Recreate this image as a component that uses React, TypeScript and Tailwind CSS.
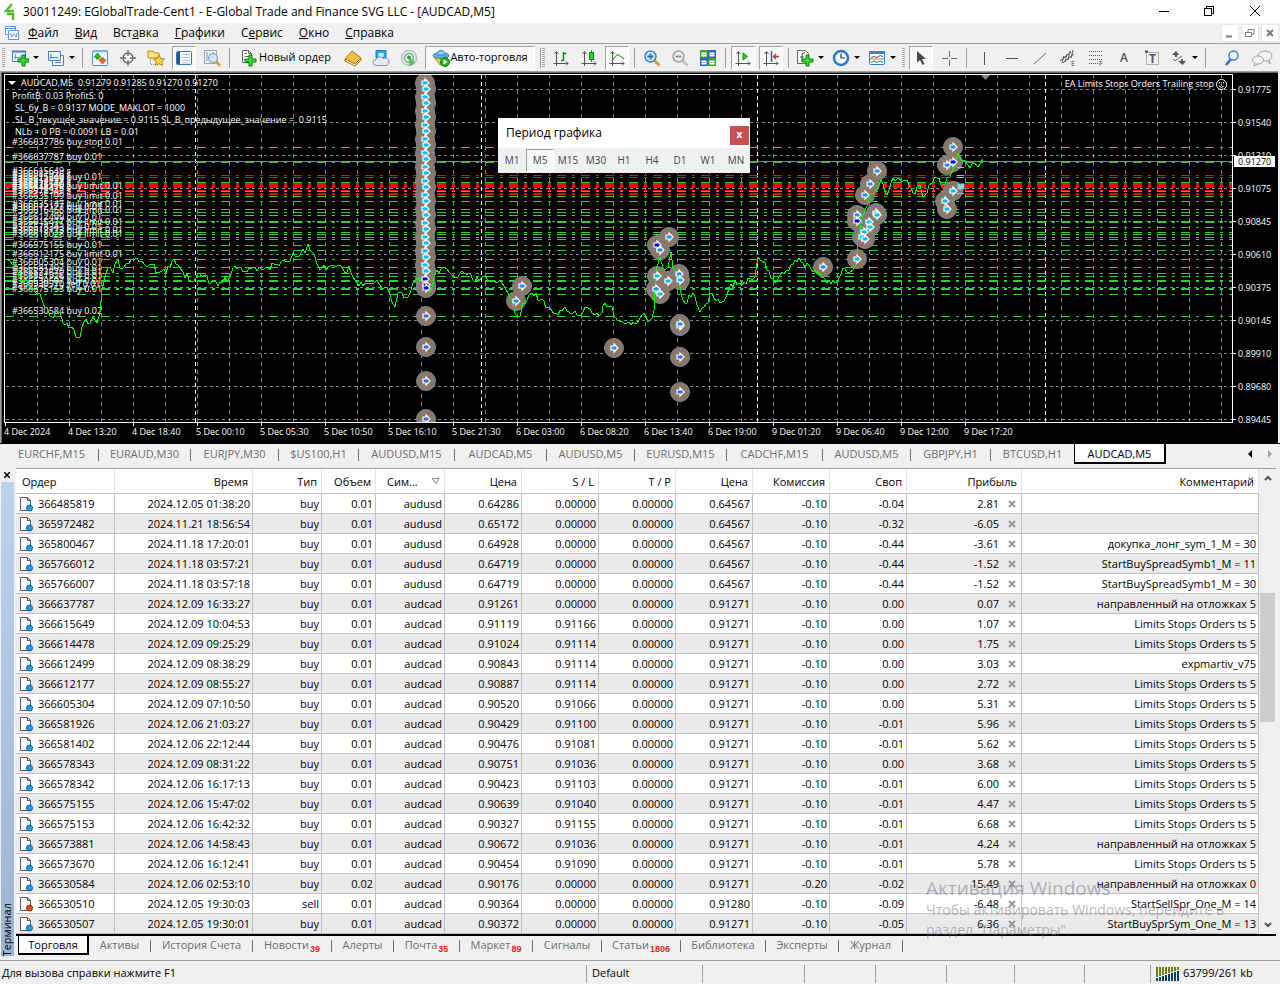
import type { ReactNode } from "react";
import clsx from "clsx";

const GRID = "#778899";
const LIME = "#32cd32";

// ---------- data ----------

const menus = [
  ["", "Ф", "айл"],
  ["", "В", "ид"],
  ["Вст", "а", "вка"],
  ["", "Г", "рафики"],
  ["С", "е", "рвис"],
  ["", "О", "кно"],
  ["", "С", "правка"],
];

const chartTabs = [
  { name: "EURCHF,M15", width: "w-[94px]" },
  { name: "EURAUD,M30", width: "w-[92px]" },
  { name: "EURJPY,M30", width: "w-[88px]" },
  { name: "$US100,H1", width: "w-[80px]" },
  { name: "AUDUSD,M15", width: "w-[96px]" },
  { name: "AUDCAD,M5", width: "w-[92px]" },
  { name: "AUDUSD,M5", width: "w-[88px]" },
  { name: "EURUSD,M15", width: "w-[92px]" },
  { name: "CADCHF,M15", width: "w-[96px]" },
  { name: "AUDUSD,M5", width: "w-[88px]" },
  { name: "GBPJPY,H1", width: "w-[80px]" },
  { name: "BTCUSD,H1", width: "w-[83px]" },
];

const terminalTabs = [
  { name: "Активы", width: "w-[62px]" },
  { name: "История Счета", width: "w-[102px]" },
  { name: "Новости", width: "w-[79px]", count: 39 },
  { name: "Алерты", width: "w-[62px]" },
  { name: "Почта", width: "w-[66px]", count: 35 },
  { name: "Маркет", width: "w-[73px]", count: 89 },
  { name: "Сигналы", width: "w-[69px]" },
  { name: "Статьи", width: "w-[79px]", count: 1806 },
  { name: "Библиотека", width: "w-[85px]" },
  { name: "Эксперты", width: "w-[73px]" },
  { name: "Журнал", width: "w-[64px]" },
];

const periods = ["M1", "M5", "M15", "M30", "H1", "H4", "D1", "W1", "MN"];

const columns = [
  { name: "Ордер", width: "w-[99px]" },
  { name: "Время", width: "w-[138px]" },
  { name: "Тип", width: "w-[69px]" },
  { name: "Объем", width: "w-[54px]" },
  { name: "Сим...", width: "w-[69px]" },
  { name: "Цена", width: "w-[77px]" },
  { name: "S / L", width: "w-[77px]" },
  { name: "T / P", width: "w-[77px]" },
  { name: "Цена", width: "w-[77px]" },
  { name: "Комиссия", width: "w-[77px]" },
  { name: "Своп", width: "w-[77px]" },
  { name: "Прибыль", width: "w-[115px]" },
  { name: "Комментарий", width: "" },
];

// order, time, type, volume, symbol, open, S/L, T/P, price, commission, swap, profit, comment
const orders = [
  ["366485819", "2024.12.05 01:38:20", "buy", "0.01", "audusd", "0.64286", "0.00000", "0.00000", "0.64567", "-0.10", "-0.04", "2.81", ""],
  ["365972482", "2024.11.21 18:56:54", "buy", "0.01", "audusd", "0.65172", "0.00000", "0.00000", "0.64567", "-0.10", "-0.32", "-6.05", ""],
  ["365800467", "2024.11.18 17:20:01", "buy", "0.01", "audusd", "0.64928", "0.00000", "0.00000", "0.64567", "-0.10", "-0.44", "-3.61", "докупка_лонг_sym_1_M = 30"],
  ["365766012", "2024.11.18 03:57:21", "buy", "0.01", "audusd", "0.64719", "0.00000", "0.00000", "0.64567", "-0.10", "-0.44", "-1.52", "StartBuySpreadSymb1_M = 11"],
  ["365766007", "2024.11.18 03:57:18", "buy", "0.01", "audusd", "0.64719", "0.00000", "0.00000", "0.64567", "-0.10", "-0.44", "-1.52", "StartBuySpreadSymb1_M = 30"],
  ["366637787", "2024.12.09 16:33:27", "buy", "0.01", "audcad", "0.91261", "0.00000", "0.00000", "0.91271", "-0.10", "0.00", "0.07", "направленный на отложках 5"],
  ["366615649", "2024.12.09 10:04:53", "buy", "0.01", "audcad", "0.91119", "0.91166", "0.00000", "0.91271", "-0.10", "0.00", "1.07", "Limits Stops Orders ts 5"],
  ["366614478", "2024.12.09 09:25:29", "buy", "0.01", "audcad", "0.91024", "0.91114", "0.00000", "0.91271", "-0.10", "0.00", "1.75", "Limits Stops Orders ts 5"],
  ["366612499", "2024.12.09 08:38:29", "buy", "0.01", "audcad", "0.90843", "0.91114", "0.00000", "0.91271", "-0.10", "0.00", "3.03", "expmartiv_v75"],
  ["366612177", "2024.12.09 08:55:27", "buy", "0.01", "audcad", "0.90887", "0.91114", "0.00000", "0.91271", "-0.10", "0.00", "2.72", "Limits Stops Orders ts 5"],
  ["366605304", "2024.12.09 07:10:50", "buy", "0.01", "audcad", "0.90520", "0.91066", "0.00000", "0.91271", "-0.10", "0.00", "5.31", "Limits Stops Orders ts 5"],
  ["366581926", "2024.12.06 21:03:27", "buy", "0.01", "audcad", "0.90429", "0.91100", "0.00000", "0.91271", "-0.10", "-0.01", "5.96", "Limits Stops Orders ts 5"],
  ["366581402", "2024.12.06 22:12:44", "buy", "0.01", "audcad", "0.90476", "0.91081", "0.00000", "0.91271", "-0.10", "-0.01", "5.62", "Limits Stops Orders ts 5"],
  ["366578343", "2024.12.09 08:31:22", "buy", "0.01", "audcad", "0.90751", "0.91036", "0.00000", "0.91271", "-0.10", "0.00", "3.68", "Limits Stops Orders ts 5"],
  ["366578342", "2024.12.06 16:17:13", "buy", "0.01", "audcad", "0.90423", "0.91103", "0.00000", "0.91271", "-0.10", "-0.01", "6.00", "Limits Stops Orders ts 5"],
  ["366575155", "2024.12.06 15:47:02", "buy", "0.01", "audcad", "0.90639", "0.91040", "0.00000", "0.91271", "-0.10", "-0.01", "4.47", "Limits Stops Orders ts 5"],
  ["366575153", "2024.12.06 16:42:32", "buy", "0.01", "audcad", "0.90327", "0.91155", "0.00000", "0.91271", "-0.10", "-0.01", "6.68", "Limits Stops Orders ts 5"],
  ["366573881", "2024.12.06 14:58:43", "buy", "0.01", "audcad", "0.90672", "0.91036", "0.00000", "0.91271", "-0.10", "-0.01", "4.24", "направленный на отложках 5"],
  ["366573670", "2024.12.06 16:12:41", "buy", "0.01", "audcad", "0.90454", "0.91090", "0.00000", "0.91271", "-0.10", "-0.01", "5.78", "Limits Stops Orders ts 5"],
  ["366530584", "2024.12.06 02:53:10", "buy", "0.02", "audcad", "0.90176", "0.00000", "0.00000", "0.91271", "-0.20", "-0.02", "15.49", "направленный на отложках 0"],
  ["366530510", "2024.12.05 19:30:03", "sell", "0.01", "audcad", "0.90364", "0.00000", "0.00000", "0.91280", "-0.10", "-0.09", "-6.48", "StartSellSpr_One_M = 14"],
  ["366530507", "2024.12.05 19:30:01", "buy", "0.01", "audcad", "0.90372", "0.00000", "0.00000", "0.91271", "-0.10", "-0.05", "6.36", "StartBuySprSym_One_M = 13"],
];

// ---------- chart data ----------

const timeLabels = [
  "4 Dec 2024", "4 Dec 13:20", "4 Dec 18:40", "5 Dec 00:10", "5 Dec 05:30", "5 Dec 10:50", "5 Dec 16:10", "5 Dec 21:30",
  "6 Dec 03:00", "6 Dec 08:20", "6 Dec 13:40", "6 Dec 19:00", "9 Dec 01:20", "9 Dec 06:40", "9 Dec 12:00", "9 Dec 17:20",
];

const priceLabels = [
  "0.91775", "0.91540", "0.91310", "0.91075", "0.90845", "0.90610", "0.90375", "0.90145", "0.89910", "0.89680", "0.89445",
];

const greenLines = [
  147, 162, 182, 191, 196, 201, 209, 212, 215, 221, 222, 227, 232, 234, 237, 239, 245, 250, 259, 267, 273, 276, 280, 281,
  288, 289, 294, 316,
];
const redLines = [175, 177, 183, 184, 185, 186, 187, 190, 193, 194];

const orderLabels: [number, string][] = [
  [145, "#366637786 buy stop 0.01"],
  [160, "#366637787 buy 0.01"],
  [174, "#366615649 s"],
  [177, "#366581926 s"],
  [180, "#366615649 buy 0.01"],
  [182, "#366612499 s"],
  [185, "#366612177 s"],
  [187, "#366573670 s"],
  [189, "#366635199 buy limit 0.01"],
  [191, "#366614478 s"],
  [194, "#366578343 s"],
  [199, "#366635199 buy limit 0.01"],
  [207, "#366635147 buy limit 0.01"],
  [210, "#366612177 buy 0.01"],
  [213, "#366616468 buy limit 0.01"],
  [220, "#366612499 buy 0.01"],
  [225, "#366615477 buy limit 0.01"],
  [230, "#366578343 buy 0.01"],
  [233, "#366612173 buy limit 0.01"],
  [237, "#366618028 buy limit 0.01"],
  [248, "#366575155 buy 0.01"],
  [257, "#366612175 buy limit 0.01"],
  [265, "#366605304 buy 0.01"],
  [271, "#366581402 buy 0.01"],
  [275, "#366573670 buy 0.01"],
  [279, "#366581926 buy 0.01"],
  [284, "#366530507 buy 0.01"],
  [287, "#366530510 sell 0.01"],
  [292, "#366575153 buy 0.01"],
  [314, "#366530584 buy 0.02"],
];

const anchors = [
  [6, 259], [15, 265], [22, 282], [28, 283], [38, 293], [43, 303], [50, 316], [60, 312], [63, 323], [72, 327], [76, 337],
  [80, 337], [84, 322], [90, 323], [93, 317], [97, 323], [100, 312], [102, 290], [106, 273], [110, 267], [113, 273],
  [118, 260], [122, 269], [127, 263], [133, 259], [142, 261], [147, 267], [152, 264], [158, 272], [166, 273], [172, 261],
  [178, 265], [183, 272], [192, 282], [198, 273], [205, 275], [209, 283], [215, 280], [218, 286], [223, 282], [230, 277],
  [233, 268], [247, 272], [253, 267], [262, 270], [277, 264], [288, 262], [293, 253], [298, 257], [303, 249], [305, 253],
  [308, 244], [313, 253], [320, 270], [328, 267], [338, 265], [345, 273], [349, 266], [357, 283], [370, 283], [377, 280],
  [382, 288], [387, 287], [392, 302], [395, 307], [398, 293], [408, 297], [413, 283], [418, 277], [430, 292], [437, 270],
  [445, 268], [452, 275], [470, 273], [473, 280], [482, 277], [492, 280], [502, 283], [508, 293], [513, 303], [517, 317],
  [520, 316], [523, 303], [532, 293], [540, 300], [548, 307], [554, 314], [565, 307], [577, 315], [588, 308], [595, 315],
  [602, 313], [603, 306], [612, 307], [617, 320], [623, 322], [637, 323], [642, 315], [650, 320], [654, 310], [655, 290],
  [657, 267], [660, 257], [663, 268], [668, 267], [671, 252], [673, 267], [678, 272], [681, 293], [685, 303], [693, 293],
  [700, 312], [708, 303], [710, 293], [722, 302], [727, 295], [735, 280], [742, 285], [748, 278], [755, 277], [758, 257],
  [765, 263], [775, 283], [782, 272], [787, 270], [795, 260], [803, 263], [813, 272], [823, 277], [827, 283], [837, 282],
  [843, 268], [850, 272], [853, 270], [857, 257], [858, 237], [865, 210], [870, 195], [875, 193], [881, 180], [887, 195],
  [893, 178], [905, 180], [913, 193], [920, 185], [923, 197], [932, 183], [935, 177], [943, 185], [950, 177], [955, 167],
  [958, 153], [961, 160], [965, 160], [970, 168], [975, 163], [978, 167], [983, 159],
];

// fills the gaps between anchors with small ticks every two pixels
function pricePath() {
  const pts: string[] = [];
  anchors.forEach(([x, y], i) => {
    pts.push(`${x},${y}`);
    const next = anchors[i + 1];
    if (!next) return;
    for (let px = x + 2; px < next[0] - 1; px += 2) {
      const t = (px - x) / (next[0] - x);
      const hash = Math.sin(px * 12.9898) * 43758;
      const noise = (hash - Math.floor(hash)) * 7 - 3.5;
      pts.push(`${px},${Math.round(y + (next[1] - y) * t + noise)}`);
    }
  });
  return pts.join(" ");
}

const SKY = "#00bfff";
const DODGER = "#1e90ff";
const ROYAL = "#4169e1";
const BLUE = "#0000ff";

const columnMarkers: [number, number, string][] = Array.from({ length: 30 }, (_, i) => [
  i % 2 ? 426 : 425,
  83 + i * 7 - (i % 2),
  i > 27 ? BLUE : SKY,
]);

const markers: [number, number, string][] = [
  ...columnMarkers,
  [426, 288, BLUE],
  [426, 316, ROYAL], [426, 347, ROYAL], [426, 381, ROYAL], [426, 419, ROYAL],
  [522, 286, DODGER], [516, 301, DODGER], [614, 348, DODGER],
  [657, 245, BLUE], [660, 250, DODGER], [669, 237, DODGER], [657, 276, SKY], [668, 281, SKY],
  [679, 274, DODGER], [680, 280, SKY], [656, 289, DODGER], [660, 294, SKY],
  [680, 326, ROYAL], [680, 324, DODGER], [680, 357, ROYAL], [680, 392, ROYAL],
  [823, 267, DODGER], [857, 259, SKY],
  [953, 147, DODGER], [947, 165, DODGER], [953, 162, BLUE], [953, 191, SKY], [945, 201, SKY], [947, 209, SKY],
  [877, 171, DODGER], [870, 184, DODGER], [865, 195, DODGER], [857, 215, DODGER], [857, 221, BLUE],
  [876, 213, SKY], [877, 215, SKY], [869, 222, SKY], [870, 227, SKY], [864, 232, SKY], [862, 237, SKY], [865, 239, SKY],
];

// ---------- chart ----------

function Chart() {
  const vertical = Array.from({ length: 38 }, (_, i) => 37 + i * 32);
  return (
    <svg
      viewBox="0 71 1280 372"
      className="block h-auto w-full bg-black font-['Open_Sans','Noto_Sans',sans-serif] text-[9px]"
      role="img"
      aria-label="AUDCAD,M5"
    >
      <defs>
        <clipPath id="plot">
          <rect x="5" y="75" width="1227" height="347" />
        </clipPath>
      </defs>
      <g shapeRendering="crispEdges" fill="none">
        <path d="M0 71.5H1280" stroke="#a0a0a0" />
        <path d="M0 72.5H1280" stroke="#696969" />
        <path d="M0.5 71V444" stroke="#a0a0a0" />
        <path d="M1.5 72V444" stroke="#696969" />
        <path d="M1279 71V444" stroke="#f0f0f0" strokeWidth="2" />
        {vertical.map((x) => (
          <path key={x} d={`M${x + 0.5} 422V75`} stroke={GRID} strokeDasharray="4 4" />
        ))}
        {priceLabels.map((p, i) => (
          <path key={p} d={`M6 ${89.5 + i * 33}H1232`} stroke={GRID} strokeDasharray="3 3" />
        ))}
        {[195, 481, 757, 1045].map((x) => (
          <path key={x} d={`M${x + 0.5} 75V422`} stroke="#fff" strokeDasharray="4 3" />
        ))}
        {greenLines.map((y) => (
          <path key={y} d={`M5 ${y + 0.5}H1232`} stroke={LIME} strokeDasharray="9 6 3 6" />
        ))}
        {redLines.map((y) => (
          <path key={y} d={`M5 ${y + 0.5}H1232`} stroke="#ff0000" strokeDasharray="9 6 3 6" />
        ))}
        <path d="M5 161.5H1232" stroke={GRID} />
      </g>

      <g fill="#fff">
        {orderLabels.map(([y, label]) => (
          <text key={y} x="12" y={y}>
            {label}
          </text>
        ))}
        <path d="M8 81H16L12 85Z" />
        <text x="21" y="86">AUDCAD,M5&nbsp; 0.91279 0.91285 0.91270 0.91270</text>
        <text x="12" y="99">ProfitB: 0.03 ProfitS: 0</text>
        <text x="15" y="111">SL_бу_B = 0.9137 MODE_MAXLOT = 1000</text>
        <text x="15" y="123">SL_B_текущее_значение = 0.9115 SL_B_предыдущее_значение =&nbsp; 0.9115</text>
        <text x="15" y="135">NLb = 0 PB = 0.0091 LB = 0.01</text>
        <text x="1214" y="87" textAnchor="end">EA Limits Stops Orders Trailing stop</text>
      </g>
      <g stroke="#fff" fill="none">
        <circle cx="1221.5" cy="84.5" r="5" />
        <path d="M1219 86Q1221.500 89 1224 86M1219.500 82V83.500M1223.500 82V83.500" />
      </g>

      <g clipPath="url(#plot)">
        {markers.map(([x, y], i) => (
          <circle key={i} cx={x} cy={y} r="9.500" fill="#8b7765" stroke={GRID} />
        ))}
        <path
          d="M957 175.500H964M957 177.500H964M958 184V189H964V184ZM957 193.500H964M957 167.500H964"
          stroke="#87ceeb"
          fill="#87ceeb"
        />
        <polyline points={pricePath()} fill="none" stroke="#00ff00" shapeRendering="crispEdges" />
        {markers.map(([x, y, color], i) => (
          <path
            key={i}
            d={`M${x - 3} ${y - 2}H${x}V${y - 4}L${x + 4} ${y}L${x} ${y + 4}V${y + 2}H${x - 3}Z`}
            fill={color}
            stroke="#fff"
            strokeWidth="1.200"
          />
        ))}
        <path d="M981 75H990L985.500 80Z" fill={GRID} />
      </g>

      <g shapeRendering="crispEdges">
        <path d="M4.500 74.500H1232.500V422.500H4.500Z" fill="none" stroke="#fff" />
        {priceLabels.map((p, i) => (
          <path key={p} d={`M1233 ${89.5 + i * 33}H1236`} stroke="#fff" />
        ))}
        {timeLabels.map((t, i) => (
          <path key={t} d={`M${5.5 + i * 64} 423V426`} stroke="#fff" />
        ))}
      </g>
      <g fill="#fff">
        {priceLabels.map((p, i) => (
          <text key={p} x="1238" y={93 + i * 33}>
            {p}
          </text>
        ))}
        {timeLabels.map((t, i) => (
          <text key={t} x={4 + i * 64} y="435">
            {t}
          </text>
        ))}
      </g>
      <rect x="1234" y="156" width="41" height="11" fill="#fff" />
      <text x="1238" y="165" fill="#000">0.91270</text>
    </svg>
  );
}

// ---------- icons ----------

function Svg({ children, size = 18 }: { children: ReactNode; size?: number }) {
  return (
    <svg width={size} height={size} viewBox="0 0 18 18" fill="none" className="shrink-0" aria-hidden="true">
      {children}
    </svg>
  );
}

const Plus = ({ x = 7, y = 6 }) => (
  <path
    d={`M${x + 4} ${y}h3v4h4v3h-4v4h-3v-4h-4v-3h4z`}
    fill="#2fe02f"
    stroke="#0b7d0b"
  />
);

const Axes = () => (
  <path d="M4.500 3V17M1.500 14.500H16M2.500 5L4.500 2.500L6.500 5M14 12.500L16 14.500L14 16.500" stroke="#555" />
);

const icons = {
  newChart: (
    <Svg>
      <path d="M1.500 2.500H14.500V12.500H1.500Z" fill="#eaf3fc" stroke="#3f7fbf" />
      <path d="M1 2.500H15" stroke="#3f7fbf" strokeWidth="2" />
      <path d="M4.500 5V10M3 8.500H11M9 6.500L11 8.500" stroke="#6ba0d0" />
      <Plus />
    </Svg>
  ),
  cascade: (
    <Svg>
      <path d="M5.500 6.500H16.500V16.500H5.500Z" fill="#fff" stroke="#3f7fbf" />
      <path d="M1.500 2.500H13.500V11.500H1.500Z" fill="#eaf3fc" stroke="#3f7fbf" />
      <path d="M1 2.500H14M4 5V10M3 8.500H11M8 13.500H14" stroke="#3f7fbf" />
    </Svg>
  ),
  marketWatch: (
    <Svg>
      <rect x="1.500" y="1.500" width="15" height="15" rx="1" fill="#f6faff" stroke="#4a90d0" />
      <path d="M2 2.500H16" stroke="#8fc0ea" strokeWidth="2" />
      <path d="M6.500 4L10 8H8V10H5V8H3Z" fill="#2fbf2f" stroke="#0b7d0b" strokeWidth=".7" />
      <path d="M11.500 15L15 11H13V9H10V11H8Z" fill="#ff6a2a" stroke="#b83208" strokeWidth=".7" />
    </Svg>
  ),
  crosshair: (
    <Svg>
      <circle cx="9" cy="9" r="5" stroke="#666" strokeWidth="1.300" />
      <path d="M9 1V7M9 11V17M1 9H7M11 9H17" stroke="#666" strokeWidth="1.300" />
    </Svg>
  ),
  folderStar: (
    <Svg>
      <path d="M1 2H6L7 4H12V9H1Z" fill="#ffe27a" stroke="#b98d1c" />
      <path d="M3.500 10V15.500H7" stroke="#888" strokeDasharray="1 1" />
      <path d="M12 6L13.700 9.500L17.500 10L14.800 12.700L15.500 16.500L12 14.700L8.500 16.500L9.200 12.700L6.500 10L10.300 9.500Z" fill="#ffd23c" stroke="#b07c10" />
    </Svg>
  ),
  navigator: (
    <Svg>
      <rect x="1.500" y="2.500" width="15" height="13" rx="1" fill="#fff" stroke="#2f78b8" />
      <rect x="2" y="3" width="3" height="12" fill="#23588c" />
      <path d="M7 5.500H15M7 8.500H15M7 11.500H15M7 14H15" stroke="#a9cbe8" />
    </Svg>
  ),
  tester: (
    <Svg>
      <rect x="1.500" y="1.500" width="12" height="13" fill="#eef1f4" stroke="#9aa7b4" />
      <path d="M4 3V12M7 5V13M10 3V9" stroke="#8794a2" />
      <circle cx="10" cy="9" r="4.500" fill="#cfe6f8" fillOpacity=".8" stroke="#6d95b8" />
      <path d="M13 12L17 17" stroke="#d9a520" strokeWidth="2.500" />
    </Svg>
  ),
  newOrder: (
    <Svg>
      <path d="M1.500 1.500H7.500L10.500 4.500V13.500H1.500Z" fill="#fff" stroke="#666" />
      <path d="M7.500 1.500V4.500H10.500M3.500 4.500H6M3.500 7.500H8M3.500 10.500H6" stroke="#666" />
      <Plus x={4} y={6} />
    </Svg>
  ),
  book: (
    <Svg>
      <path d="M8 2L17 9L11 15L1 10Z" fill="#f0bf4c" stroke="#a8741a" />
      <path d="M1 10V12L11 17L17 11V9L11 15Z" fill="#e0a838" stroke="#a8741a" />
      <path d="M2 11.500L11 16L16 11" stroke="#fff2cf" />
    </Svg>
  ),
  cloud: (
    <Svg>
      <path d="M4 1.500H14V9H4Z" fill="#29a9f0" stroke="#1479c0" />
      <rect x="6.500" y="4" width="5" height="4" fill="#d6f0ff" />
      <path d="M4 16.500a3 3 0 0 1 0-6a4 4 0 0 1 7-1a3.500 3.500 0 0 1 4 7z" fill="#e6ecf5" stroke="#7f93b8" />
    </Svg>
  ),
  signal: (
    <Svg>
      <circle cx="9" cy="9" r="7.500" stroke="#a9c6bb" strokeWidth="1.500" />
      <circle cx="9" cy="9" r="4.500" stroke="#6eaaa0" strokeWidth="1.500" />
      <path d="M9 8V17A8 8 0 0 0 15 13Z" fill="#5cc152" />
      <circle cx="9" cy="8.500" r="2" fill="#37a337" />
    </Svg>
  ),
  autoTrade: (
    <Svg>
      <path d="M2 8H16L10 16H8Z" fill="#f3c94e" stroke="#b08a1c" />
      <ellipse cx="9" cy="6.500" rx="8" ry="3" fill="#5fb0e4" stroke="#3a86bd" />
      <path d="M5 6Q5 1.500 9 1.500T13 6Z" fill="#8fd0f4" stroke="#3a86bd" />
      <circle cx="13" cy="13" r="4.500" fill="#22b822" stroke="#0b7d0b" />
      <path d="M11.500 10.500L15.500 13L11.500 15.500Z" fill="#fff" />
    </Svg>
  ),
  bars: (
    <Svg>
      <Axes />
      <path d="M11.500 3V12M9 11.500H11M12 4.500H14.500" stroke="#118811" strokeWidth="1.500" />
    </Svg>
  ),
  candle: (
    <Svg>
      <Axes />
      <path d="M11.500 1V13" stroke="#118811" />
      <rect x="9.500" y="3.500" width="4" height="7" fill="#2fd02f" stroke="#118811" />
    </Svg>
  ),
  line: (
    <Svg>
      <Axes />
      <path d="M5 11Q9 3 12 7L16 10" stroke="#118811" />
    </Svg>
  ),
  zoomIn: (
    <Svg>
      <path d="M11 11L16.500 16.500" stroke="#d9a520" strokeWidth="3" />
      <circle cx="7.500" cy="7.500" r="5.500" fill="#d8ecfb" stroke="#3f7fbf" strokeWidth="1.500" />
      <path d="M7.500 4.500V10.500M4.500 7.500H10.500" stroke="#2a6fb5" strokeWidth="1.800" />
    </Svg>
  ),
  zoomOut: (
    <Svg>
      <path d="M11 11L16.500 16.500" stroke="#c4c4c4" strokeWidth="3" />
      <circle cx="7.500" cy="7.500" r="5.500" fill="#efefef" stroke="#a0a0a0" strokeWidth="1.500" />
      <path d="M4.500 7.500H10.500" stroke="#909090" strokeWidth="1.800" />
    </Svg>
  ),
  tile: (
    <Svg>
      <rect x="1" y="1" width="8" height="8" fill="#3fa52a" />
      <rect x="9" y="1" width="8" height="8" fill="#2f62c8" />
      <rect x="1" y="9" width="8" height="8" fill="#2f62c8" />
      <rect x="9" y="9" width="8" height="8" fill="#3fa52a" />
      <path d="M2.500 5.500H7.500M10.500 5.500H15.500M2.500 13.500H7.500M10.500 13.500H15.500" stroke="#fff" strokeWidth="4" />
      <path d="M3.500 5.500H6.500M11.500 5.500H14.500M3.500 13.500H6.500M11.500 13.500H14.500" stroke="#9fb8a8" />
    </Svg>
  ),
  autoScroll: (
    <Svg>
      <Axes />
      <path d="M9 4L13.500 7.500L9 11Z" fill="#2fd02f" stroke="#118811" />
    </Svg>
  ),
  chartShift: (
    <Svg>
      <Axes />
      <path d="M9.500 2V13" stroke="#2a5f9f" strokeWidth="1.500" />
      <path d="M17 7.500H12M14 5L11.500 7.500L14 10" stroke="#b83208" strokeWidth="1.300" />
    </Svg>
  ),
  indicator: (
    <Svg>
      <path d="M1.500 1.500H9.500L12.500 4.500V14.500H1.500Z" fill="#fff" stroke="#666" />
      <path d="M9 4Q6 3 6 6V12M4 8H8" stroke="#444" />
      <Plus x={6} y={6} />
    </Svg>
  ),
  clock: (
    <Svg>
      <circle cx="9" cy="9" r="7" fill="#f4faff" stroke="#2a78c8" strokeWidth="2.500" />
      <path d="M9 4.500V9H13" stroke="#333" strokeWidth="1.200" />
    </Svg>
  ),
  template: (
    <Svg>
      <rect x="1.500" y="2.500" width="15" height="13" rx="1" fill="#fff" stroke="#2a78c8" />
      <path d="M1 3.500H17" stroke="#2a88d8" strokeWidth="3" />
      <path d="M3 8.500L6 7.500L9 8.500L12 6.500L15 7.500" stroke="#b03020" />
      <path d="M2 10H16" stroke="#888" />
      <path d="M3 13.500L6 12L9 13.500L12 12L15 13.500" stroke="#118811" />
    </Svg>
  ),
  cursor: (
    <Svg>
      <path d="M5 2L14 10H10L12.500 15L10.500 16L8 11L5 13.500Z" fill="#484848" />
    </Svg>
  ),
  cross: (
    <Svg>
      <path d="M9.500 2V8M9.500 11V17M2 9.500H8M11 9.500H17" stroke="#666" />
    </Svg>
  ),
  vline: (
    <Svg>
      <path d="M9.500 3V16" stroke="#555" />
    </Svg>
  ),
  hline: (
    <Svg>
      <path d="M3 9.500H15" stroke="#555" />
    </Svg>
  ),
  trend: (
    <Svg>
      <path d="M3 15L15 4" stroke="#666" />
    </Svg>
  ),
  channel: (
    <Svg>
      <path d="M1 12L12 3M4 14L15 5M5 7L3 14M8 5L6 13M11 2L9 11M14 1L12 9" stroke="#555" />
      <text x="12" y="17" fill="#444" fontSize="7">E</text>
    </Svg>
  ),
  fibo: (
    <Svg>
      <path d="M2 2.500H15M2 6.500H15M2 10.500H15M2 14.500H11" stroke="#555" strokeDasharray="1 1" />
      <text x="12" y="17" fill="#444" fontSize="7">F</text>
    </Svg>
  ),
  label: (
    <Svg>
      <rect x="3.500" y="3.500" width="12" height="12" stroke="#666" strokeDasharray="1 1" />
      <path d="M2 2.500H5" stroke="#444" strokeWidth="2" />
      <text x="6" y="14" fill="#555" fontSize="12" fontWeight="bold">T</text>
    </Svg>
  ),
  arrows: (
    <Svg>
      <path d="M2 6L6 2L9 6H7V8H5V6ZM8 12H11V10H13V12H16L12.500 16Z" fill="#555" />
      <path d="M3 10L5 12L9 9L12 7" stroke="#666" />
    </Svg>
  ),
  search: (
    <Svg>
      <path d="M8 10L3 16" stroke="#2a68c8" strokeWidth="2.500" />
      <circle cx="10.500" cy="6.500" r="4.500" fill="#eef6ff" stroke="#3f7fd8" strokeWidth="1.500" />
    </Svg>
  ),
  chat: (
    <svg width="22" height="18" viewBox="0 0 22 18" fill="none" className="shrink-0" aria-hidden="true">
      <ellipse cx="14" cy="7" rx="7" ry="5" fill="#f4f4f4" stroke="#a0a0a0" />
      <path d="M16 11L19 15L18 10" fill="#f4f4f4" stroke="#a0a0a0" />
      <ellipse cx="7" cy="11" rx="5.500" ry="4" fill="#f8f8f8" stroke="#a0a0a0" />
      <path d="M4 14L3 17L7 15" fill="#f8f8f8" stroke="#a0a0a0" />
    </svg>
  ),
};

// ---------- toolbar ----------

function Tool({
  label,
  children,
  pressed,
  menu,
  className = "w-6",
}: {
  label: string;
  children: ReactNode;
  pressed?: boolean;
  menu?: boolean;
  className?: string;
}) {
  return (
    <button
      aria-label={label}
      className={clsx(
        "flex h-6 shrink-0 items-center justify-center border",
        pressed ? "border-t-gray-400 border-l-gray-400 border-r-white border-b-white bg-[#f8f8f8]" : "border-transparent",
        menu ? "w-8 gap-1" : className,
      )}
    >
      {children}
      {menu && <span className="border-x-3 border-t-3 border-x-transparent border-t-black" />}
    </button>
  );
}

const Divider = () => <span className="mx-px h-5 w-px shrink-0 bg-[#a0a0a0]" />;
const Grip = () => (
  <span className="h-5 w-[3px] shrink-0 bg-[repeating-linear-gradient(to_bottom,#a8a8a8_0_1px,transparent_1px_2px)]" />
);

function Toolbar() {
  return (
    <div className="flex h-7 items-center gap-1 overflow-hidden border-t border-[#a0a0a0] pl-0.5">
      <Grip />
      <Tool label="Новый график" menu>{icons.newChart}</Tool>
      <Tool label="Профили" menu>{icons.cascade}</Tool>
      <Divider />
      <Tool label="Обзор рынка">{icons.marketWatch}</Tool>
      <Tool label="Окно данных">{icons.crosshair}</Tool>
      <Tool label="Навигатор">{icons.folderStar}</Tool>
      <Tool label="Терминал" pressed>{icons.navigator}</Tool>
      <Tool label="Тестер стратегий">{icons.tester}</Tool>
      <Divider />
      <Tool label="Новый ордер" className="w-[102px]">
        {icons.newOrder}
        <span className="whitespace-nowrap">Новый ордер</span>
      </Tool>
      <Tool label="MetaEditor">{icons.book}</Tool>
      <Tool label="Облако">{icons.cloud}</Tool>
      <Tool label="Сигналы">{icons.signal}</Tool>
      <Tool label="Авто-торговля" pressed className="w-[110px]">
        {icons.autoTrade}
        <span className="whitespace-nowrap">Авто-торговля</span>
      </Tool>
      <div className="flex">
        <Divider />
        <Grip />
      </div>
      <Tool label="Бары">{icons.bars}</Tool>
      <Tool label="Свечи">{icons.candle}</Tool>
      <Tool label="Линия" pressed>{icons.line}</Tool>
      <Divider />
      <Tool label="Увеличить">{icons.zoomIn}</Tool>
      <Tool label="Уменьшить">{icons.zoomOut}</Tool>
      <Tool label="Плитка">{icons.tile}</Tool>
      <Divider />
      <Tool label="Автопрокрутка" pressed>{icons.autoScroll}</Tool>
      <Tool label="Сдвиг графика" pressed>{icons.chartShift}</Tool>
      <Divider />
      <Tool label="Индикаторы" menu>{icons.indicator}</Tool>
      <Tool label="Периоды" menu>{icons.clock}</Tool>
      <Tool label="Шаблоны" menu>{icons.template}</Tool>
      <Grip />
      <Tool label="Курсор" pressed>{icons.cursor}</Tool>
      <Tool label="Перекрестие">{icons.cross}</Tool>
      <Divider />
      <Tool label="Вертикальная линия">{icons.vline}</Tool>
      <Tool label="Горизонтальная линия">{icons.hline}</Tool>
      <Tool label="Трендовая линия">{icons.trend}</Tool>
      <Tool label="Канал">{icons.channel}</Tool>
      <Tool label="Фибоначчи">{icons.fibo}</Tool>
      <Tool label="Текст">
        <span className="text-xs font-semibold text-[#555]">A</span>
      </Tool>
      <Tool label="Метка">{icons.label}</Tool>
      <Tool label="Стрелки" menu>{icons.arrows}</Tool>
      <Divider />
      <div className="ml-auto flex gap-1.5 pr-1.5">
        <Tool label="Поиск">{icons.search}</Tool>
        <Tool label="Чат">{icons.chat}</Tool>
      </div>
    </div>
  );
}

// ---------- window chrome ----------

function TitleBar() {
  return (
    <header className="flex h-[23px] items-center bg-white pl-1">
      <svg width="12" height="18" viewBox="0 0 12 18" fill="none" className="mr-[7px]" aria-hidden="true">
        <path d="M8 1L2 8H8M10 8H8M3 11H9V17" stroke="#5cb531" strokeWidth="2.500" />
      </svg>
      <h1 className="text-xs">30011249: EGlobalTrade-Cent1 - E-Global Trade and Finance SVG LLC - [AUDCAD,M5]</h1>
      <div className="ml-auto flex pr-0.5 pb-0.5">
        <button aria-label="Свернуть" className="flex w-[45px] justify-center">
          <svg width="10" height="10" stroke="#000" shapeRendering="crispEdges"><path d="M0 5.500H10" /></svg>
        </button>
        <button aria-label="Восстановить" className="flex w-[46px] justify-center">
          <svg width="10" height="10" fill="none" stroke="#000" shapeRendering="crispEdges">
            <path d="M.5 2.500H7.500V9.500H.5ZM2.500 2V.5H9.500V7.500H8" />
          </svg>
        </button>
        <button aria-label="Закрыть" className="flex w-[46px] justify-center">
          <svg width="10" height="10" stroke="#000"><path d="M0 0L10 10M10 0L0 10" /></svg>
        </button>
      </div>
    </header>
  );
}

function MenuBar() {
  return (
    <nav className="flex h-5 items-center pl-[5px] text-xs">
      <svg width="15" height="14" viewBox="0 0 15 14" fill="none" aria-hidden="true">
        <path d="M.5 .5H10.500V8.500H.5ZM.5 2.500H10.500" stroke="#5a96d8" fill="#fff" />
        <path d="M3.500 4.500H13.500V13.500H3.500Z" stroke="#5a96d8" fill="#fff" />
        <path d="M5 7L7 11L9 8L11 11L12 7" stroke="#5a96d8" />
      </svg>
      {menus.map(([before, key, after]) => (
        <button key={before + key + after} className="px-2">
          {before}
          <u>{key}</u>
          {after}
        </button>
      ))}
      <div className="ml-auto flex gap-0.5 pr-px text-[#708090]">
        {["M4 11.500H10", "M3.500 7.500H9.500V11.500H3.500ZM6 7V4.500H12V9H10", "M5 5L11 11M11 5L5 11"].map((d, i) => (
          <button key={d} aria-label={["Свернуть окно", "Восстановить окно", "Закрыть окно"][i]} className="border border-gray-200 bg-white">
            <svg width="16" height="16" fill="none" stroke="currentColor" strokeWidth={i === 1 ? 1 : 2}>
              <path d={d} />
            </svg>
          </button>
        ))}
      </div>
    </nav>
  );
}

function PeriodPanel() {
  return (
    <div className="absolute top-[47px] left-[498px] w-[252px] bg-[#f0f0f0]">
      <div className="flex h-[30px] items-center bg-white pr-px pl-2 text-xs">
        Период графика
        <button
          aria-label="Закрыть панель"
          className="mt-1 ml-auto flex size-[19px] items-center justify-center bg-[#c75050] text-[10px] font-bold text-white"
        >
          x
        </button>
      </div>
      <div className="flex h-[25px] items-center text-[10px] text-[#444]">
        {periods.map((p) => (
          <button
            key={p}
            className={clsx(
              "h-[23px] flex-1 border",
              p === "M5" ? "border-t-gray-400 border-l-gray-400 border-r-white border-b-white bg-[#f8f8f8]" : "border-transparent",
            )}
          >
            {p}
          </button>
        ))}
      </div>
    </div>
  );
}

function ChartTabs() {
  return (
    <div className="flex h-[22px] items-start border-t border-black pl-[5px] text-[11px] text-[#6d6d6d]">
      {chartTabs.map((tab, i) => (
        <button key={i} className={clsx("flex h-[21px] shrink-0 items-center justify-center", tab.width)}>
          <span className="flex-1">{tab.name}</span>
          {i < chartTabs.length - 1 && <span className="h-3 w-px bg-[#6d6d6d]" />}
        </button>
      ))}
      <button className="h-5 w-[92px] shrink-0 border border-t-0 border-r-2 border-b-2 border-black bg-white pt-0.5 leading-4 text-black">
        AUDCAD,M5
      </button>
      <div className="ml-auto flex h-[19px] items-center gap-4 pr-2">
        <button aria-label="Назад" className="border-y-4 border-r-4 border-y-transparent border-r-black" />
        <button aria-label="Вперед" className="border-y-4 border-l-4 border-y-transparent border-l-gray-400" />
      </div>
    </div>
  );
}

// ---------- terminal ----------

function OrderIcon({ sell }: { sell: boolean }) {
  return (
    <svg width="14" height="16" viewBox="0 0 14 16" fill="none" className="shrink-0" aria-hidden="true">
      <path d="M1.500 1.500H8.500L11.500 4.500V14.500H1.500Z" fill="#fff" stroke="#555" />
      <path d="M8.500 1.500V4.500H11.500" stroke="#555" />
      <circle cx="10.500" cy="12" r="3" fill={sell ? "#e2481c" : "#1c9be8"} stroke={sell ? "#9a2a08" : "#0b68b0"} />
    </svg>
  );
}

function OrdersTable() {
  return (
    <table className="w-full table-fixed border-separate border-spacing-0 bg-white text-right text-[11px] leading-[19px]">
      <thead>
        <tr>
          {columns.map((col, i) => (
            <th
              key={i}
              className={clsx(
                "h-[25px] border-r border-b border-r-[#e5e5e5] border-b-[#c0c0c0] pr-1 pl-1.5 font-normal whitespace-nowrap",
                i === 0 && "text-left",
                col.width,
              )}
            >
              {i === 4 ? (
                <span className="flex items-center justify-between pl-[5px]">
                  {col.name}
                  <svg width="8" height="6" fill="none" stroke="#888"><path d="M0 .5H7L4 5.500Z" /></svg>
                </span>
              ) : (
                col.name
              )}
            </th>
          ))}
        </tr>
      </thead>
      <tbody>
        {orders.map((row) => (
          <tr key={row[0]} className="even:bg-[#eaeaea]">
            {row.map((cell, i) => (
              <td key={i} className="h-5 border-r border-b border-[#c0c0c0] py-0 pr-0.5 pl-[3px] whitespace-nowrap">
                {i === 0 ? (
                  <span className="flex items-center gap-[5px]">
                    <OrderIcon sell={row[2] === "sell"} />
                    {cell}
                  </span>
                ) : i === 11 ? (
                  <span className="flex items-center justify-end gap-[9px]">
                    {cell}
                    <button aria-label={`Закрыть ${row[0]}`} className="mr-[3px]">
                      <svg width="8" height="8" stroke="#999" strokeWidth="2"><path d="M1 1L7 7M7 1L1 7" /></svg>
                    </button>
                  </span>
                ) : (
                  cell
                )}
              </td>
            ))}
          </tr>
        ))}
      </tbody>
    </table>
  );
}

function Scrollbar() {
  return (
    <div className="flex w-[17px] shrink-0 flex-col items-center bg-[#f0f0f0] py-1.5">
      <svg width="8" height="6" fill="none" stroke="#555" strokeWidth="2"><path d="M1 5L4 2L7 5" /></svg>
      <div className="mt-[112px] h-[129px] w-[15px] bg-[#cdcdcd]" />
      <svg width="8" height="6" fill="none" stroke="#555" strokeWidth="2" className="mt-auto"><path d="M1 1L4 4L7 1" /></svg>
    </div>
  );
}

function TerminalTabs() {
  return (
    <div className="flex h-[22px] items-start border-t-2 border-black pl-0.5 text-[11px] text-[#6d6d6d]">
      <button className="h-[19px] w-[71px] shrink-0 border-r-2 border-b-2 border-l border-black bg-white leading-4 text-black">Торговля</button>
      {terminalTabs.map((tab) => (
        <button key={tab.name} className={clsx("flex h-[19px] shrink-0 items-center whitespace-nowrap", tab.width)}>
          <span className="flex flex-1 justify-center">
            {tab.name}
            {tab.count && (
              <sub className="top-1 pl-px font-['Liberation_Sans',sans-serif] text-[9px] leading-4 font-bold text-[#e81c24]">
                {tab.count}
              </sub>
            )}
          </span>
          <span className="h-3 w-px bg-[#6d6d6d]" />
        </button>
      ))}
    </div>
  );
}

function StatusBar() {
  return (
    <footer className="flex h-6 items-center border-t border-[#a0a0a0] pt-0.5 text-[11px]">
      <span className="flex-1 pl-0.5">Для вызова справки нажмите F1</span>
      <span className="h-[18px] w-[116px] border-l border-[#a0a0a0] pl-[5px]">Default</span>
      <span className="h-[18px] w-[102px] border-l border-[#a0a0a0]" />
      <span className="h-[18px] w-[71px] border-l border-[#a0a0a0]" />
      <span className="h-[18px] w-[71px] border-l border-[#a0a0a0]" />
      <span className="h-[18px] w-[68px] border-l border-[#a0a0a0]" />
      <span className="h-[18px] w-[70px] border-l border-[#a0a0a0]" />
      <span className="h-[18px] w-[66px] border-l border-[#a0a0a0]" />
      <span className="flex h-[18px] w-[130px] items-center gap-[3px] border-l border-[#a0a0a0] pl-[5px]">
        <svg width="24" height="14" aria-hidden="true" shapeRendering="crispEdges">
          {[0, 3, 6, 9, 12, 15, 18, 21].map((x, i) => (
            <g key={x}>
              <rect x={x} y="0" width="2" height={10 - i} fill="#6b7f1c" />
              <rect x={x} y={11 - i} width="2" height={3 + i} fill="#0b3f66" />
            </g>
          ))}
        </svg>
        63799/261 kb
      </span>
    </footer>
  );
}

function Terminal() {
  return (
    <section className="flex pt-[3px]">
      <div className="flex w-4 shrink-0 flex-col pl-px">
        <button aria-label="Закрыть терминал" className="flex h-3.5 items-center pl-[3px]">
          <svg width="6" height="6" stroke="#000" strokeWidth="1.500"><path d="M0 0L6 6M6 0L0 6" /></svg>
        </button>
        <div className="mr-0.5 flex flex-1 items-end bg-linear-to-b from-[#bdd3ec] to-[#9bb5d2]">
          <span className="rotate-180 text-[11px] leading-[12px] [writing-mode:vertical-rl]">Терминал</span>
        </div>
      </div>
      <div className="min-w-0 flex-1 pr-1">
        <div className="flex border-t border-[#a0a0a0]">
          <div className="min-w-0 flex-1">
            <OrdersTable />
          </div>
          <Scrollbar />
        </div>
        <TerminalTabs />
      </div>
    </section>
  );
}

export default function App() {
  return (
    <div className="relative bg-[#f0f0f0] font-['Open_Sans','Noto_Sans',sans-serif] text-[11px] text-black">
      <TitleBar />
      <MenuBar />
      <Toolbar />
      <main className="relative">
        <Chart />
        <PeriodPanel />
      </main>
      <ChartTabs />
      <Terminal />
      <div className="h-1" />
      <StatusBar />
      {/* activation watermark */}
      <div className="pointer-events-none absolute right-[34px] bottom-[44px] w-[320px] text-[14px] leading-5 whitespace-nowrap text-gray-500/50">
        <p className="text-[19px] leading-6">Активация Windows</p>
        <p>
          Чтобы активировать Windows, перейдите в
          <br />
          раздел "Параметры".
        </p>
      </div>
    </div>
  );
}
